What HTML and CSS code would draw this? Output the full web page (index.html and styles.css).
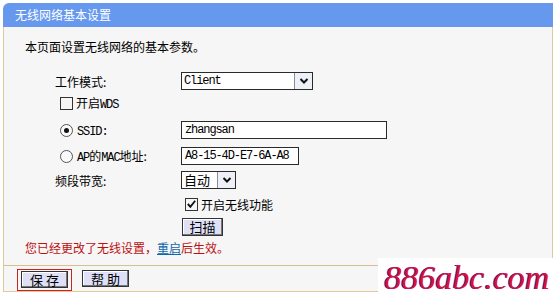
FILE: index.html
```html
<!DOCTYPE html>
<html>
<head>
<meta charset="utf-8">
<link rel="stylesheet" href="styles.css">
</head>
<body>
<div class="panel">
  <div class="head">无线网络基本设置</div>
  <div class="box">
    <div class="main">
      <div class="intro">本页面设置无线网络的基本参数。</div>
      <div class="row r1">
        <span class="label">工作模式:</span>
        <span class="select w-mode"><span class="val">Client</span><span class="arrow"><svg width="10" height="8" viewBox="0 0 10 8"><path d="M1.5 2 L5 5.5 L8.5 2" fill="none" stroke="#111" stroke-width="2"/></svg></span></span>
      </div>
      <div class="row r2 indent">
        <span class="chk"></span><span class="ctext">开启<span class="asc">WDS</span></span>
      </div>
      <div class="row r3 indent">
        <span class="radio on"></span><span class="rlabel"><span class="asc">SSID:</span></span>
        <span class="input w-ssid">zhangsan</span>
      </div>
      <div class="row r4 indent">
        <span class="radio"></span><span class="rlabel"><span class="asc">AP</span>的<span class="asc">MAC</span>地址:</span>
        <span class="input w-mac">A8-15-4D-E7-6A-A8</span>
      </div>
      <div class="row r5">
        <span class="label">频段带宽:</span>
        <span class="select w-band"><span class="val cjk">自动</span><span class="arrow"><svg width="10" height="8" viewBox="0 0 10 8"><path d="M1.5 2 L5 5.5 L8.5 2" fill="none" stroke="#111" stroke-width="2"/></svg></span></span>
      </div>
      <div class="row r6 valcol">
        <span class="chk checked"><svg width="12" height="12" viewBox="0 0 12 12"><path d="M2 6 L4.8 9 L10 2.5" fill="none" stroke="#111" stroke-width="2"/></svg></span><span class="ctext">开启无线功能</span>
      </div>
      <div class="row r7 valcol">
        <span class="btn scan">扫描</span>
      </div>
      <div class="row r8 note">您已经更改了无线设置，<span class="link">重启</span>后生效。</div>
    </div>
    <div class="foot">
      <span class="focus"><span class="btn fbtn">保 存</span></span>
      <span class="btn fbtn">帮 助</span>
    </div>
  </div>
  <div class="mark">886abc.com</div>
</div>
</body>
</html>
```
FILE: styles.css
```css
html, body {
  margin: 0;
  padding: 0;
  background: #ffffff;
}
body {
  width: 556px;
  height: 297px;
  overflow: hidden;
  font-family: "Noto Sans CJK SC", "Liberation Sans", sans-serif;
  font-size: 12px;
  color: #000;
}
.panel {
  position: relative;
  margin: 3px 0 0 3px;
  width: 550px;
}
.head {
  height: 24px;
  line-height: 23px;
  background: #6699ee;
  color: #fff;
  padding-left: 12px;
  border-top-left-radius: 6px;
  font-size: 12px;
}
.box {
  border-left: 1px solid #e2c99a;
  border-right: 1px solid #e2c99a;
  border-bottom: 1px solid #e2c99a;
  background: #f6f6f6;
}
.main {
  padding-top: 10px;
  padding-bottom: 8px;
  border-bottom: 1px solid #d9bf90;
}
.intro {
  height: 20px;
  line-height: 20px;
  padding-left: 21px;
}
.row {
  display: flex;
  align-items: center;
  height: 22px;
}
.r1 { margin-top: 13px; padding-left: 51px; }
.r2 { height: 22px; }
.r3 { margin-top: 5px; }
.r4 { margin-top: 4px; }
.r5 { margin-top: 2px; padding-left: 51px; }
.r6 { margin-top: 2px; }
.r7 { margin-top: 2px; height: 19px; }
.r8 { margin-top: 1px; height: 20px; }
.indent { padding-left: 56px; }
.valcol { padding-left: 177px; }
.label {
  width: 126px;
  flex: none;
}
.rlabel {
  width: 104px;
  flex: none;
  padding-left: 4px;
}
.asc {
  font-family: "Liberation Mono", monospace;
  font-size: 12px;
  letter-spacing: -1.1px;
}
.chk {
  width: 11px;
  height: 11px;
  border: 1px solid #333;
  background: transparent;
  flex: none;
  display: flex;
  align-items: center;
  justify-content: center;
}
.chk svg { display: block; }
.ctext { padding-left: 3px; }
.r6 .chk { margin-left: 4px; }
.radio {
  width: 11px;
  height: 11px;
  border: 1px solid #555;
  border-radius: 50%;
  flex: none;
  background: #fafafa;
  display: flex;
  align-items: center;
  justify-content: center;
}
.radio.on::after {
  content: "";
  width: 5px;
  height: 5px;
  border-radius: 50%;
  background: #111;
}
.select {
  display: flex;
  height: 16px;
  border: 1px solid #2a2a2a;
  background: #fff;
  box-sizing: content-box;
}
.w-mode { width: 130px; }
.w-band { width: 53px; }
.select .val {
  flex: 1;
  padding-left: 2px;
  line-height: 16px;
  font-family: "Liberation Mono", monospace;
  font-size: 12px;
  letter-spacing: -1.1px;
}
.select .val.cjk {
  font-family: "Noto Sans CJK SC", sans-serif;
  font-size: 13px;
  letter-spacing: 0;
}
.arrow {
  width: 17px;
  border-left: 1px solid #8a8a9a;
  background: #eef0f8;
  display: flex;
  align-items: center;
  justify-content: center;
}
.input {
  height: 16px;
  line-height: 16px;
  border: 1px solid #2a2a2a;
  background: #fff;
  padding-left: 3px;
  font-family: "Liberation Mono", monospace;
  font-size: 12px;
  letter-spacing: -1.1px;
}
.w-ssid { width: 201px; }
.w-mac { width: 113px; }
.btn {
  display: inline-flex;
  align-items: center;
  justify-content: center;
  background: #dfe0f8;
  border: 1px solid #333;
  box-shadow: inset -1px -1px 0 #777, inset 1px 1px 0 #fff;
  font-size: 13px;
}
.scan {
  width: 39px;
  height: 16px;
  margin-left: 1px;
}
.note {
  padding-left: 21px;
  color: #bb1111;
}
.link {
  color: #1166aa;
  text-decoration: underline;
}
.foot {
  height: 25px;
  display: flex;
  align-items: center;
  padding-left: 13px;
  gap: 10px;
}
.focus {
  display: inline-flex;
  border: 1px solid #d02020;
  padding: 1px 3px 2px 3px;
  margin-top: 2px;
}
.fbtn {
  width: 45px;
  height: 15px;
  font-size: 13px;
}
.mark {
  position: absolute;
  right: -3px;
  bottom: -6px;
  width: 178px;
  height: 40px;
  background: #fff;
  font-family: "Liberation Serif", serif;
  font-style: italic;
  font-size: 34px;
  line-height: 40px;
  color: #dd1133;
  text-shadow: -1px 0 0 #3333bb;
  text-align: center;
}
```
